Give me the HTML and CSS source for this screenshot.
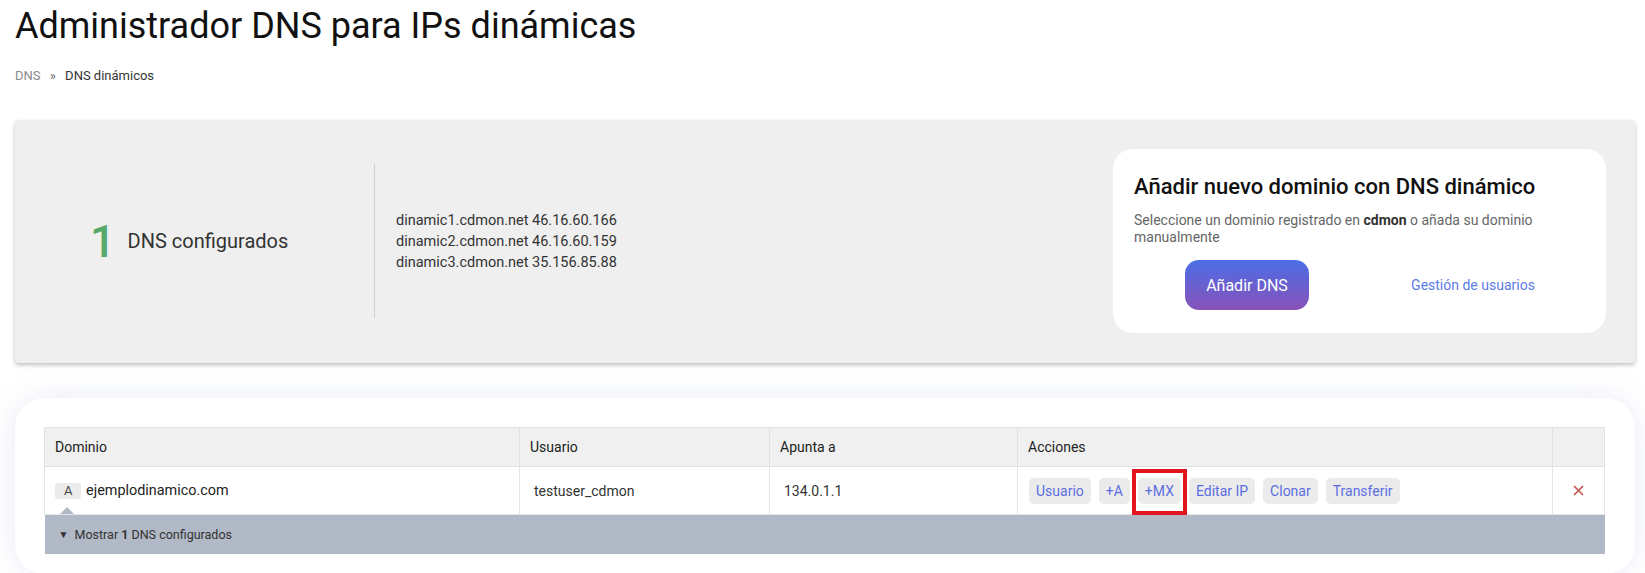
FILE: index.html
```html
<!DOCTYPE html>
<html lang="es">
<head>
  <meta charset="UTF-8" />
  <title>Administrador DNS para IPs dinámicas</title>
  <meta name="viewport" content="width=device-width, initial-scale=1.0" />
  <link rel="stylesheet" href="styles.css">
</head>
<body>
  <div class="page">
    <h1 class="page-title">Administrador DNS para IPs dinámicas</h1>
    <div class="breadcrumb">
      <a href="#" class="crumb-link">DNS</a>
      <span class="crumb-sep">»</span>
      <span class="crumb-current">DNS dinámicos</span>
    </div>

    <div class="summary">
      <div class="stats">
        <span class="stats-num">1</span>
        <span class="stats-label">DNS configurados</span>
      </div>
      <div class="divider"></div>
      <div class="servers">
        <div>dinamic1.cdmon.net 46.16.60.166</div>
        <div>dinamic2.cdmon.net 46.16.60.159</div>
        <div>dinamic3.cdmon.net 35.156.85.88</div>
      </div>
      <div class="add-card">
        <h2>Añadir nuevo dominio con DNS dinámico</h2>
        <p>Seleccione un dominio registrado en <strong>cdmon</strong> o añada su dominio<br>manualmente</p>
        <div class="add-actions">
          <div class="add-col"><button class="btn-add">Añadir DNS</button></div>
          <div class="add-col"><a href="#" class="users-link">Gestión de usuarios</a></div>
        </div>
      </div>
    </div>

    <div class="list-card">
      <table class="dns-table">
        <colgroup>
          <col style="width: 475px">
          <col style="width: 250px">
          <col style="width: 248px">
          <col style="width: 535px">
          <col>
        </colgroup>
        <thead>
          <tr>
            <th>Dominio</th>
            <th>Usuario</th>
            <th>Apunta a</th>
            <th>Acciones</th>
            <th></th>
          </tr>
        </thead>
        <tbody>
          <tr class="row">
            <td class="cell-domain"><span class="type-badge">A</span> ejemplodinamico.com</td>
            <td class="cell-pad">testuser_cdmon</td>
            <td class="cell-pad">134.0.1.1</td>
            <td class="cell-actions">
              <div class="actions">
                <button class="btn-action">Usuario</button>
                <button class="btn-action">+A</button>
                <button class="btn-action highlight">+MX</button>
                <button class="btn-action">Editar IP</button>
                <button class="btn-action">Clonar</button>
                <button class="btn-action">Transferir</button>
              </div>
            </td>
            <td class="cell-delete">
              <svg width="11" height="11" viewBox="0 0 11 11"><path d="M1 1 L10 10 M10 1 L1 10" stroke="#c2504c" stroke-width="1.6" fill="none"/></svg>
            </td>
          </tr>
          <tr class="row-more">
            <td colspan="5">
              <div class="more">
                <span class="caret">▼</span> Mostrar <strong>1</strong> DNS configurados
              </div>
            </td>
          </tr>
        </tbody>
      </table>
    </div>
  </div>
</body>
</html>
```

FILE: styles.css
```css
body {
  margin: 0;
  font-family: Roboto, 'Liberation Sans', sans-serif;
  background: #fff;
  color: #222;
}

.page {
  padding: 0 10px 0 15px;
}

.page-title {
  margin: 5px 0 0;
  font-size: 36px;
  font-weight: 400;
  color: #111;
}

.breadcrumb {
  margin-top: 21px;
  font-size: 13px;
  color: #333;
}

.crumb-link {
  color: #8a8a8a;
  text-decoration: none;
}

.crumb-sep {
  margin: 0 6px;
  color: #666;
}

.summary {
  margin-top: 37px;
  background: #efefef;
  border-radius: 4px;
  box-shadow: 0 2px 4px rgba(0,0,0,0.25);
  padding: 29px 29px 30px;
  display: flex;
  align-items: center;
}

.stats {
  width: 330px;
  padding-left: 46px;
  box-sizing: border-box;
  display: flex;
  align-items: center;
}

.stats-num {
  font-size: 45px;
  font-weight: 500;
  color: #58a86b;
}

.stats-label {
  margin-left: 12px;
  font-size: 20px;
  color: #333;
}

.divider {
  width: 1px;
  height: 154px;
  background: #cfcfcf;
}

.servers {
  margin-left: 21px;
  font-size: 14.5px;
  line-height: 21px;
  color: #333;
}

.add-card {
  margin-left: auto;
  width: 493px;
  box-sizing: border-box;
  background: #fff;
  border-radius: 20px;
  padding: 25px 20px 23px 21px;
}

.add-card h2 {
  margin: 0;
  font-size: 22px;
  font-weight: 500;
  color: #111;
}

.add-card p {
  margin: 13px 0 0;
  font-size: 14px;
  line-height: 17px;
  color: #666;
}

.add-card p strong {
  color: #333;
}

.add-actions {
  display: flex;
  margin-top: 14px;
}

.add-col {
  flex: 1;
  display: flex;
  justify-content: center;
  align-items: center;
}

.btn-add {
  width: 124px;
  height: 50px;
  border: none;
  border-radius: 14px;
  background: linear-gradient(180deg, #4a6ee6, #8852b9);
  color: #fff;
  font-family: inherit;
  font-size: 16px;
}

.users-link {
  color: #5c7ce6;
  font-size: 14px;
  text-decoration: none;
}

.list-card {
  margin-top: 35px;
  background: #fff;
  border-radius: 30px;
  box-shadow: 0 0 30px rgba(200,208,232,0.4);
  padding: 29px 30px 20px 29px;
}

.dns-table {
  width: 100%;
  border-collapse: collapse;
  table-layout: fixed;
  font-size: 14px;
}

.dns-table th {
  height: 38px;
  padding: 0 10px;
  background: #f0f0f0;
  border: 1px solid #e2e2e2;
  text-align: left;
  font-weight: 400;
  color: #222;
}

.dns-table td {
  border: 1px solid #e6e6e6;
}

.row td {
  height: 47px;
  padding: 0;
}

.cell-domain {
  padding-left: 10px !important;
  font-size: 14.4px;
  color: #222;
}

.type-badge {
  display: inline-block;
  padding: 0 9px;
  height: 16px;
  line-height: 16px;
  margin-right: 1px;
  background: #ebebeb;
  border-radius: 3px;
  font-size: 13px;
  color: #444;
}

.cell-pad {
  padding-left: 14px !important;
  color: #333;
}

.cell-actions {
  padding-left: 11px !important;
}

.actions {
  display: flex;
  gap: 8px;
}

.btn-action {
  height: 26px;
  padding: 0 7px;
  border: none;
  border-radius: 5px;
  background: #ebebeb;
  color: #5b6ee1;
  font-family: inherit;
  font-size: 14px;
}

.highlight {
  position: relative;
}

.highlight::after {
  content: "";
  position: absolute;
  top: -9px;
  bottom: -11px;
  left: -6px;
  right: -6px;
  border: 4px solid #e3141d;
}

.cell-delete {
  text-align: center;
}

.row-more td {
  height: 39px;
  padding: 0;
  background: #b2b9c6;
  border: none;
}

.more {
  position: relative;
  padding-left: 14px;
  font-size: 12.5px;
  color: #333;
}

.more::before {
  content: "";
  position: absolute;
  top: -20px;
  left: 15px;
  border-left: 7px solid transparent;
  border-right: 7px solid transparent;
  border-bottom: 7px solid #b2b9c6;
}

.caret {
  font-size: 10px;
  margin-right: 3px;
  vertical-align: 1px;
}
```
